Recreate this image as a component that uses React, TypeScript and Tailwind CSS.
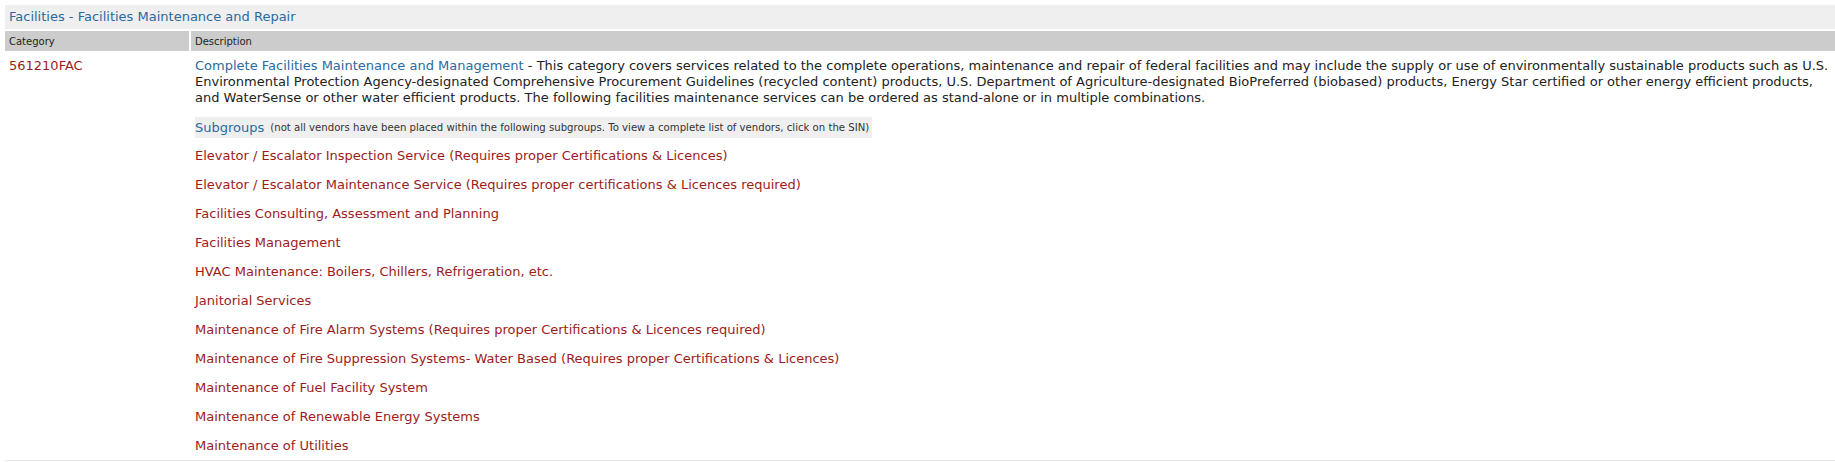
const subgroups = [
  "Elevator / Escalator Inspection Service (Requires proper Certifications & Licences)",
  "Elevator / Escalator Maintenance Service (Requires proper certifications & Licences required)",
  "Facilities Consulting, Assessment and Planning",
  "Facilities Management",
  "HVAC Maintenance: Boilers, Chillers, Refrigeration, etc.",
  "Janitorial Services",
  "Maintenance of Fire Alarm Systems (Requires proper Certifications & Licences required)",
  "Maintenance of Fire Suppression Systems- Water Based (Requires proper Certifications & Licences)",
  "Maintenance of Fuel Facility System",
  "Maintenance of Renewable Energy Systems",
  "Maintenance of Utilities",
];

export default function App() {
  return (
    <div className="min-h-[462px] bg-white pt-[5px] pl-[5px] font-['DejaVu_Sans',Verdana,sans-serif] text-[13px] text-[#222]">
      <div className="flex h-[24px] items-center bg-[#efefef] pl-[4px] text-[13px] text-[#2a6a9e]">
        Facilities - Facilities Maintenance and Repair
      </div>
      <div className="mt-[2px] flex h-[20px] gap-[2px] text-[10px] text-[#222]">
        <div className="flex w-[184px] items-center bg-[#ccc] pl-[4px]">Category</div>
        <div className="flex flex-1 items-center bg-[#ccc] pl-[4px]">Description</div>
      </div>
      <div className="flex gap-[2px] border-b border-[#e6e6e6]">
        <div className="w-[184px] pl-[4px] pt-[7px] leading-[16px] text-[13px] text-[#9b1c1c]">
          561210FAC
        </div>
        <div className="flex-1 pl-[4px] pt-[7px] pr-[4px]">
          <p className="leading-[16px]">
            <span className="text-[#2a6a9e]">Complete Facilities Maintenance and Management</span>{" "}
            - This category covers services related to the complete operations, maintenance and
            repair of federal facilities and may include the supply or use of environmentally
            sustainable products such as U.S. Environmental Protection Agency-designated
            Comprehensive Procurement Guidelines (recycled content) products, U.S. Department of
            Agriculture-designated BioPreferred (biobased) products, Energy Star certified or other
            energy efficient products, and WaterSense or other water efficient products. The
            following facilities maintenance services can be ordered as stand-alone or in multiple
            combinations.
          </p>
          <div className="mt-[11px] inline-flex h-[21px] items-center bg-[#efefef] pr-[3px]">
            <span className="text-[13px] text-[#2a6a9e]">Subgroups</span>
            <span className="ml-[6px] text-[10.15px] text-[#333]">
              (not all vendors have been placed within the following subgroups. To view a complete
              list of vendors, click on the SIN)
            </span>
          </div>
          <ul className="mt-[3px]">
            {subgroups.map((s) => (
              <li key={s} className="flex h-[29px] items-center text-[#9b1c1c]">
                {s}
              </li>
            ))}
          </ul>
        </div>
      </div>
    </div>
  );
}
